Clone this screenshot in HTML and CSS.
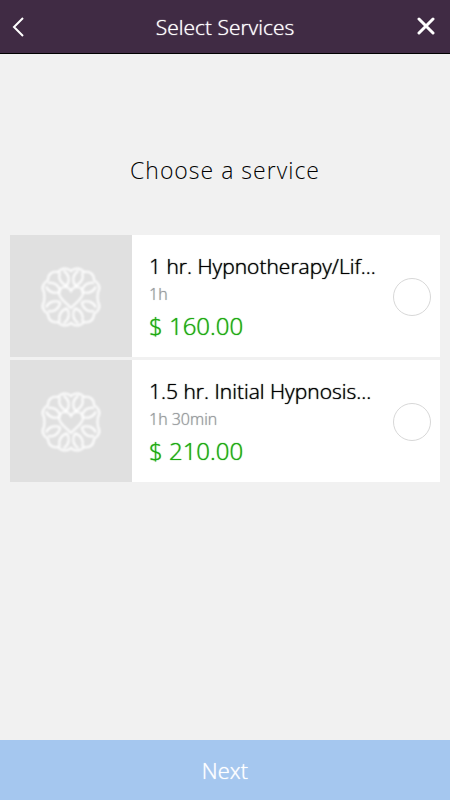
FILE: index.html
```html
<!DOCTYPE html>
<html lang="en">
<head>
<meta charset="utf-8">
<meta name="viewport" content="width=device-width, initial-scale=1">
<title>Select Services</title>
<link rel="stylesheet" href="styles.css">
</head>
<body>
<svg class="defs" aria-hidden="true">
  <defs>
    <g id="leaf">
      <path d="M0 -12C-5 -16 -6 -22 -2 -27M0 -12C5 -16 6 -22 2 -27"/>
    </g>
    <symbol id="flower" viewBox="-32 -32 64 64">
      <path d="M0 -26C3 -29 9 -30 13 -25C19 -26 23 -23 23 -17C28 -14 30 -9 27 -5Q26 0 27 5C30 9 28 14 23 17C23 23 19 26 13 25C9 30 3 29 0 26C-3 29 -9 30 -13 25C-19 26 -23 23 -23 17C-28 14 -30 9 -27 5Q-26 0 -27 -5C-30 -9 -28 -14 -23 -17C-23 -23 -19 -26 -13 -25C-9 -30 -3 -29 0 -26Z"/>
      <use href="#leaf" transform="rotate(20)"/>
      <use href="#leaf" transform="rotate(63)"/>
      <use href="#leaf" transform="rotate(117)"/>
      <use href="#leaf" transform="rotate(160)"/>
      <use href="#leaf" transform="rotate(200)"/>
      <use href="#leaf" transform="rotate(243)"/>
      <use href="#leaf" transform="rotate(297)"/>
      <use href="#leaf" transform="rotate(340)"/>
      <path d="M0 11C-4 6 -12 2 -12 -4C-12 -11 -3 -12 0 -6C3 -12 12 -11 12 -4C12 2 4 6 0 11Z"/>
    </symbol>
  </defs>
</svg>
<div class="page">
  <header class="bar">
    <button class="icon-button" type="button" aria-label="Back">
      <svg width="12" height="20" viewBox="0 0 12 20"><path d="M11 1L2 10L11 19"/></svg>
    </button>
    <h1 class="title">Select Services</h1>
    <button class="icon-button close" type="button" aria-label="Close">
      <svg width="18" height="18" viewBox="0 0 18 18"><path d="M2 2L16 16M16 2L2 16"/></svg>
    </button>
  </header>
  <main class="content">
    <h2 class="heading">Choose a service</h2>
    <ul class="services">
      <li>
        <label class="service" for="service-1">
          <span class="thumb"><svg class="flower" aria-hidden="true"><use href="#flower"/></svg></span>
          <span class="details">
            <span class="name">1 hr. Hypnotherapy/Lif...</span>
            <span class="duration">1h</span>
            <span class="price">$ 160.00</span>
          </span>
          <input class="choice" type="radio" name="service" id="service-1">
        </label>
      </li>
      <li>
        <label class="service" for="service-2">
          <span class="thumb"><svg class="flower" aria-hidden="true"><use href="#flower"/></svg></span>
          <span class="details">
            <span class="name">1.5 hr. Initial Hypnosis...</span>
            <span class="duration">1h 30min</span>
            <span class="price">$ 210.00</span>
          </span>
          <input class="choice" type="radio" name="service" id="service-2">
        </label>
      </li>
    </ul>
  </main>
  <button class="next" type="button">Next</button>
</div>
</body>
</html>
```
FILE: styles.css
```css
* { box-sizing: border-box; }
body {
  margin: 0;
  background: #f1f1f1;
  font-family: "Open Sans", "Noto Sans", sans-serif;
  font-weight: 300;
  color: #000;
}
button { font: inherit; border: 0; margin: 0; cursor: pointer; }
.defs { display: none; }
.page { min-height: 100vh; display: flex; flex-direction: column; }
.bar {
  display: flex;
  align-items: center;
  height: 54px;
  padding: 0 12px;
  background: #402b44;
  border-bottom: 1px solid #000;
}
.icon-button {
  display: flex;
  align-items: center;
  width: 24px;
  height: 32px;
  padding: 0;
  background: none;
}
.icon-button svg { fill: none; stroke: #fff; stroke-width: 2; }
.close { justify-content: center; padding-bottom: 2px; }
.close svg { stroke-width: 3; stroke-linecap: round; }
.title, .name, .duration, .price, .next { text-shadow: 0 0 1px currentColor; }
.title {
  flex: 1;
  margin: 0;
  text-align: center;
  color: #fff;
  font-size: 21px;
  font-weight: 300;
  line-height: 28px;
}
.content { flex: 1; padding: 100px 10px 0; }
.heading {
  margin: 0 0 48px;
  text-align: center;
  font-size: 23px;
  font-weight: 300;
  line-height: 33px;
  letter-spacing: 1px;
}
.services {
  display: grid;
  gap: 3px;
  margin: 0;
  padding: 0;
  list-style: none;
}
.service {
  display: flex;
  align-items: center;
  background: #fff;
  cursor: pointer;
}
.thumb {
  display: flex;
  flex: none;
  align-items: center;
  justify-content: center;
  width: 122px;
  height: 122px;
  background: #e0e0e0;
}
.flower {
  width: 64px;
  height: 64px;
  margin-top: 2px;
  fill: none;
  stroke: #fff;
  stroke-width: 2;
  filter: blur(1px);
}
.details {
  display: flex;
  flex: 1;
  flex-direction: column;
  min-width: 0;
  padding: 4px 0 0 17px;
}
.name { font-size: 21px; line-height: 30px; white-space: nowrap; }
.duration { color: #96999c; font-size: 16px; line-height: 26px; }
.price { color: #1caa10; font-size: 24px; line-height: 38px; }
.choice {
  appearance: none;
  flex: none;
  width: 38px;
  height: 38px;
  margin: 2px 9px 0 0;
  border: 1px solid #d8d8d8;
  border-radius: 50%;
  background: #fff;
}
.choice:checked { background: #22ac14; }
.next {
  width: 100%;
  height: 60px;
  padding: 0;
  background: #a5c7ef;
  color: #fff;
  font-size: 22px;
  line-height: 60px;
}
```
